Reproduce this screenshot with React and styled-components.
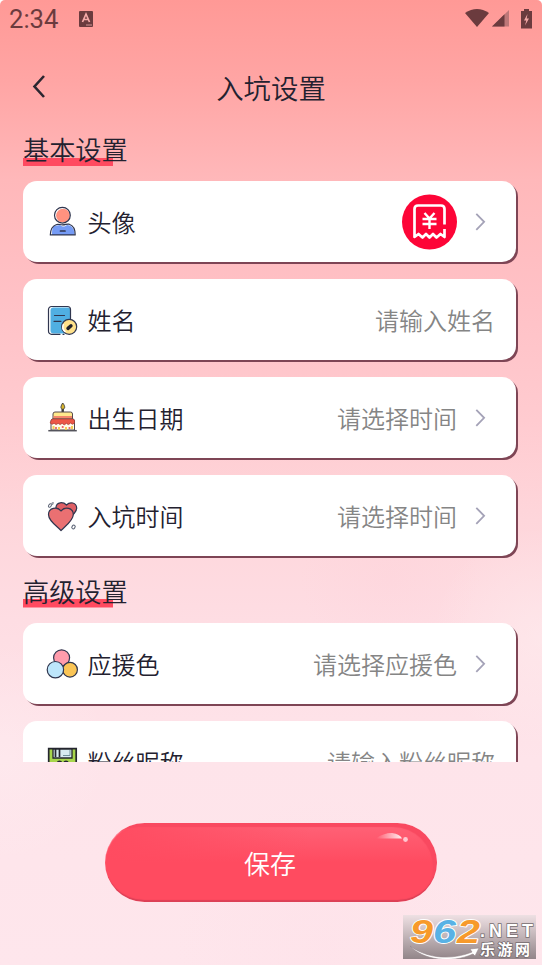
import React from "react";
import styled, { createGlobalStyle } from "styled-components";

const GlobalStyle = createGlobalStyle`
  * {
    box-sizing: border-box;
  }
  body {
    margin: 0;
    background-color: #fff;
    font-family: "Noto Sans CJK SC", sans-serif;
    color: #23212f;
  }
`;
const Page = styled.div`
  position: relative;
  width: 542px;
  height: 965px;
  overflow: hidden;
  display: flex;
  flex-direction: column;
  border-radius: 5px 5px 0 0;
  background-image: radial-gradient(circle at 100% 66%, #fff3f366 0, #fff3f300 110px),
    radial-gradient(circle at 72% 60%, #ffc4d122 0, #ffc4d100 90px),
    radial-gradient(circle at 0% 78%, #fff4f644 0, #fff4f600 110px),
    radial-gradient(circle at 60% 98%, #ffd3df22 0, #ffd3df00 150px),
    linear-gradient(
      #ff9996 0,
      #ffa5a4 80px,
      #ffb8ba 180px,
      #ffc1c6 300px,
      #ffcbd0 420px,
      #fed6db 520px,
      #fedde3 620px,
      #fee4ea 760px,
      #fee6ec 965px
    );
`;
const StatusBar = styled.div`
  display: flex;
  align-items: center;
  height: 38px;
  padding: 0 9px;
  color: #6b3b3e;
`;
const Clock = styled.span`
  width: 70px;
  font-family: Roboto, sans-serif;
  font-size: 25.6px;
  line-height: 38px;
`;
const StatusIcons = styled.div`
  display: flex;
  align-items: center;
  gap: 3px;
  margin-top: -1px;
  margin-left: auto;
`;
const Header = styled.header`
  display: grid;
  grid-template-columns: 31px 1fr 31px;
  align-items: center;
  height: 92px;
  padding: 6px 23px 0;
`;
const BackButton = styled.button`
  display: flex;
  align-items: center;
  justify-content: center;
  height: 40px;
  margin-top: -3px;
  padding: 0;
  border-width: 0;
  background-color: transparent;
`;
const Title = styled.h1`
  margin: 0;
  font-size: 27.4px;
  font-weight: 350;
  line-height: 40px;
  text-align: center;
`;
const List = styled.main`
  height: 632px;
  padding: 0 26px 0 23px;
  overflow: hidden;
`;
const SectionTitle = styled.h2`
  width: max-content;
  height: 36px;
  margin: 0 0 15px;
  font-size: 26.2px;
  font-weight: 350;
  line-height: 38px;
  background: linear-gradient(#ff4a60, #ff4a60) 0 100% / 90px 8.5px no-repeat;
`;
const Cards = styled.div`
  display: flex;
  flex-direction: column;
  gap: 16.6px;
  margin-bottom: 15.6px;
`;
const Card = styled.div`
  display: flex;
  align-items: center;
  height: 81.4px;
  padding: 1px 21px 0 23px;
  border-radius: 14px;
  background-color: #fff;
  box-shadow: 2px 2px 0.5px #7e4555;
`;
const IconBox = styled.div`
  display: flex;
  width: 32px;
  height: 32px;
  margin-right: 9.5px;
`;
const Label = styled.span`
  font-size: 24px;
  font-weight: 350;
  line-height: 36px;
`;
const Value = styled.span`
  display: flex;
  align-items: center;
  margin-left: auto;
  color: #858585;
  font-size: 24px;
  font-weight: 350;
  line-height: 36px;
`;
const Chevron = styled.svg`
  margin-left: 17px;
  margin-right: 8px;
`;
const Footer = styled.footer`
  display: flex;
  justify-content: center;
  padding-top: 61px;
`;
const SaveButton = styled.button`
  position: relative;
  width: 332px;
  height: 79px;
  padding: 0 2px 1px 0;
  border-width: 0;
  border-radius: 40px;
  background: linear-gradient(100deg, #ff4b60 0, #ff4b6000 60%),
    linear-gradient(#ff6378 0, #ff4b60 50%, #ff4b60 100%);
  box-shadow: inset 0 -3px 1px -1px #dc4056, inset -5px 5px 1px -1px #f94960,
    inset 0 1px 1px #ff8f9f;
  color: #fff;
  font-family: inherit;
  font-size: 26px;
  font-weight: 350;
`;
const Shine = styled.svg`
  position: absolute;
  top: 8px;
  right: 27px;
`;
const Watermark = styled.div`
  position: absolute;
  left: 403px;
  top: 915px;
`;

function Svg({ w = 32, h = 32, children }) {
  return (
    <svg width={w} height={h} viewBox={`0 0 ${w} ${h}`} fill="none">
      {children}
    </svg>
  );
}

const line = {
  stroke: "#30364f",
  strokeWidth: 1.2,
  strokeLinecap: "round",
  strokeLinejoin: "round",
};

const AvatarIcon = () => (
  <Svg>
    <circle cx="17" cy="9.6" r="6.9" fill="#ff927f" />
    <circle cx="16.4" cy="9.2" r="7.9" {...line} />
    <path d="M8 20c3 0 4-1 6-1 3 2 4 2 7 0 5 0 8 5 7.500 10H6c0-4 0-7 2-9Z" fill="#759bf5" />
    <path d="M10 18.700c-4 1.400-5.500 5.300-5.700 10.200h24.900c0-5-2-9.500-6-10.700-2.500-.6-3.500.7-6.600.7-3 0-4.600-1.300-6.600-.2Z" {...line} />
    <path d="M14.500 25h4.500" {...line} strokeWidth="1.700" />
  </Svg>
);

const NameIcon = () => (
  <Svg>
    <rect x="4.500" y="3.500" width="20" height="26" rx="3" fill="#50afe2" />
    <path d="M14 30.300H5.500a3 3 0 0 1-3-3V5.500a3 3 0 0 1 3-3h16a3 3 0 0 1 3 3v10M17 30.300h1" {...line} />
    <path d="M8.500 11.500h10M8 17.300h7" {...line} />
    <circle cx="23.200" cy="22.800" r="7.500" fill="#ffe18a" {...line} />
    <path d="M17.500 20a6.500 6.500 0 0 0 2 8" stroke="#fff" strokeWidth="1.500" />
    <path d="m22 24.400 3-2.600" stroke="#20202a" strokeWidth="3.400" strokeLinecap="round" />
  </Svg>
);

const CakeIcon = () => (
  <Svg>
    <path d="M16.700 11V7" stroke="#3b3b38" strokeWidth="2.400" />
    <path d="M16.700 1c3 3.500 2.300 6 0 6.300-2.600-.5-2-3.300 0-6.300Z" fill="#d9b52c" stroke="#444" />
    <path d="M7 17v-5q0-2 2-2h15.500q2 0 2 2v5Z" fill="#ffe98c" stroke="#554a4e" />
    <path d="M7.500 14h18.500v2.500H7.500Z" fill="#f3876c" />
    <path d="M5 28v-9q0-2 2-2h19.500q2 0 2 2v9Z" fill="#fffbea" stroke="#554a4e" />
    <path d="M5 19q0-2 2-2h19.500q2 0 2 2v2q-2 2.500-4 0-2 3-4.200.3-2 3-4.200 0-2 2.500-4 0-2 2.500-4 0-2 2-4-.3Z" fill="#ed5746" stroke="#a43f39" strokeWidth=".7" />
    <path d="M7.500 24v3M13 25v3M20 25v3M26 24v3" stroke="#f4cf55" strokeWidth="2" />
    <path d="M10 25v2M16.700 24v2M23.500 25v2" stroke="#ed6969" strokeWidth="1.800" />
    <path d="M2.300 28.700h28.500" stroke="#54545c" strokeWidth="1.500" />
  </Svg>
);

const HeartIcon = () => (
  <Svg>
    <path d="M20.500 20C15 16 9.500 11 10 7c.6-5 7-5.500 10.500-2C24 1.200 30.400 2.500 30.700 8c0 5-6 9-10.200 12Z" fill="#df5f65" {...line} />
    <path d="M15 30.500C9.500 25 2.500 20.500 2.500 14.500 2.500 8 11 6 15 11c4-5 12.300-3 12.300 3.500C27.300 20.500 20 25.500 15 30.500Z" fill="#ea7072" {...line} />
    <ellipse cx="4" cy="5.500" rx="1.200" ry="2" transform="rotate(35 4 5.500)" stroke="#555e70" />
    <ellipse cx="6.500" cy="3.500" rx=".6" ry="1.200" transform="rotate(35 6.500 3.500)" stroke="#8f96a0" />
    <ellipse cx="27.500" cy="27" rx="1.500" ry="2" transform="rotate(35 27.500 27)" stroke="#555e70" />
  </Svg>
);

const ColorIcon = () => (
  <Svg>
    <circle cx="15.600" cy="9.800" r="8" fill="#ff9cac" {...line} />
    <circle cx="24" cy="21.700" r="7.400" fill="#fac556" {...line} />
    <circle cx="9.400" cy="21.700" r="8.200" fill="#bde6fb" {...line} />
  </Svg>
);

const DiskIcon = () => (
  <Svg>
    <path d="M2.700 2.700h27.500v27H2.700Z" fill="#a7d64c" stroke="#25262f" strokeWidth="1.700" />
    <path d="M7 3h19v9H7Z" fill="#d8ecf0" stroke="#25262f" strokeWidth="1.300" />
    <path d="M9.500 3v8M13.500 3v8" stroke="#25262f" strokeWidth="1.700" />
    <path d="M17 9.500h7V4" stroke="#719199" />
    <ellipse cx="13.500" cy="16" rx="2.500" ry="1.500" fill="#25262f" />
    <ellipse cx="20" cy="16" rx="2.500" ry="1.500" fill="#25262f" />
  </Svg>
);

const AvatarBadge = () => (
  <Svg w={55} h={56}>
    <circle cx="27.500" cy="28" r="27.500" fill="#fd0537" />
    <path
      d="M42.500 30.500V15q0-3.500-3.500-3.500H16q-3.500 0-3.500 3.500V43l4-3 4 3.500 3.500-3.500 3.500 3.500 3.500-3.500 3.500 3.500 4-3.500 4 3V35"
      stroke="#fff"
      strokeWidth="2.700"
      strokeLinejoin="round"
    />
    <path d="m22.500 19 5 5.500 5-5.500M27.500 24.500v10.500M20.500 25h14M20.500 30h14" stroke="#fff" strokeWidth="2.400" />
  </Svg>
);

function Arrow() {
  return (
    <Chevron width="13" height="20" viewBox="0 0 13 20" fill="none">
      <path d="m2.300 1.800 7.800 8-7.800 8" stroke="#a4a2b7" strokeWidth="1.800" />
    </Chevron>
  );
}

function Row({ icon, label, value, arrow }) {
  return (
    <Card>
      <IconBox>{icon}</IconBox>
      <Label>{label}</Label>
      <Value>
        {value}
        {arrow && <Arrow />}
      </Value>
    </Card>
  );
}

function SiteMark() {
  return (
    <Svg w={133} h={44}>
      <defs>
        <linearGradient id="plate" x1="0" y1="0" x2="0" y2="1">
          <stop offset="0" stopColor="#eee0e3" />
          <stop offset="1" stopColor="#928589" />
        </linearGradient>
      </defs>
      <path d="M0 0h133v44H0Z" fill="url(#plate)" />
      <g
        fontFamily="Liberation Sans, sans-serif"
        fontWeight="700"
        fontStyle="italic"
        fontSize="33.500"
        stroke="#fff"
        strokeWidth="1.800"
        strokeLinejoin="round"
        paintOrder="stroke"
      >
        <text x="7" y="28" textLength="23" lengthAdjust="spacingAndGlyphs" fill="#f79a2b">9</text>
        <text x="30" y="28" textLength="23" lengthAdjust="spacingAndGlyphs" fill="#59b2e5">6</text>
        <text x="54" y="28" textLength="23" lengthAdjust="spacingAndGlyphs" fill="#f79a2b">2</text>
      </g>
      <path d="M7 31c18 13 42 14 62 6l-2-3 9-1-4 8-2-2C48 49 20 45 7 31Z" fill="#fff" stroke="#938489" strokeWidth=".6" />
      <g fill="#fff" stroke="#756b6e" strokeWidth="1.500" paintOrder="stroke" fontWeight="700">
        <text x="77" y="22" fontFamily="Liberation Sans, sans-serif" fontSize="18" textLength="53">.NET</text>
        <text x="77" y="39.500" fontFamily="Noto Sans CJK SC, sans-serif" fontSize="15" textLength="50">乐游网</text>
      </g>
    </Svg>
  );
}

export default function App() {
  return (
    <>
      <GlobalStyle />
      <Page>
        <StatusBar>
          <Clock>2:34</Clock>
          <Svg w={14} h={16}>
            <rect width="14" height="16" rx="1" fill="#6b3b3e" />
            <path d="m3.500 11 3.500-8 3.500 8M5 8.500h4" stroke="#f5a9a8" strokeWidth="1.700" />
            <path d="M7 14h6" stroke="#d59595" />
          </Svg>
          <StatusIcons>
            <Svg w={24} h={19}>
              <path d="M0 4Q12-4 24 4L12 18Z" fill="#6b3b3e" />
            </Svg>
            <Svg w={17} h={17}>
              <path d="M17 0v16.500H0Z" fill="#bd7778" />
              <path d="M12.500 4.200V16.500H0Z" fill="#6b3b3e" />
            </Svg>
            <Svg w={21} h={20}>
              <path d="M9 2h3V0h5v2h3v17.500H9Z" fill="#6b3b3e" />
              <path d="m15.500 5-3.500 6.500h2.300L13 16.500l4-7h-2.300Z" fill="#f5a9a8" />
            </Svg>
          </StatusIcons>
        </StatusBar>
        <Header>
          <BackButton>
            <Svg w={18} h={28}>
              <path d="M14 4 4.500 14.500 14 25" stroke="#2b2630" strokeWidth="2.600" />
            </Svg>
          </BackButton>
          <Title>入坑设置</Title>
        </Header>
        <List>
          <SectionTitle>基本设置</SectionTitle>
          <Cards>
            <Row icon={<AvatarIcon />} label="头像" value={<AvatarBadge />} arrow />
            <Row icon={<NameIcon />} label="姓名" value="请输入姓名" />
            <Row icon={<CakeIcon />} label="出生日期" value="请选择时间" arrow />
            <Row icon={<HeartIcon />} label="入坑时间" value="请选择时间" arrow />
          </Cards>
          <SectionTitle>高级设置</SectionTitle>
          <Cards>
            <Row icon={<ColorIcon />} label="应援色" value="请选择应援色" arrow />
            <Row icon={<DiskIcon />} label="粉丝昵称" value="请输入粉丝昵称" />
          </Cards>
        </List>
        <Footer>
          <SaveButton>
            保存
            <Shine width="36" height="12" viewBox="0 0 36 12" fill="none">
              <defs>
                <linearGradient id="shine">
                  <stop offset="0" stopColor="#fff" stopOpacity="0" />
                  <stop offset="1" stopColor="#fff" stopOpacity=".9" />
                </linearGradient>
              </defs>
              <path d="M2 7.500Q9 2 18 2q8 1 10 5.500Z" fill="url(#shine)" />
              <circle cx="31.500" cy="8.500" r="2.400" fill="#ffc7d0" />
            </Shine>
          </SaveButton>
        </Footer>
        <Watermark>
          <SiteMark />
        </Watermark>
      </Page>
    </>
  );
}
